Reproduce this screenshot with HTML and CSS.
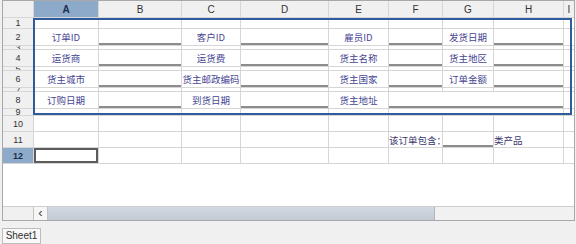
FILE: index.html
```html
<!DOCTYPE html>
<html lang="zh-CN">
<head>
    <meta charset="UTF-8">
    <title>订单</title>
    <link rel="stylesheet" href="styles.css">
</head>
<body>
    <div class="sheet">
        <div class="grid">
            <div class="corner"></div>
            <div class="ch active">A</div><div class="ch">B</div><div class="ch">C</div><div class="ch">D</div>
            <div class="ch">E</div><div class="ch">F</div><div class="ch">G</div><div class="ch">H</div><div class="ch">I</div>

            <div class="rh">1</div>
            <div></div><div></div><div></div><div></div><div></div><div></div><div></div><div></div><div></div>

            <div class="rh">2</div>
            <div class="lbl">订单ID</div><div class="val"></div>
            <div class="lbl">客户ID</div><div class="val"></div>
            <div class="lbl">雇员ID</div><div class="val"></div>
            <div class="lbl">发货日期</div><div class="val"></div>
            <div></div>

            <div class="rh">3</div>
            <div></div><div></div><div></div><div></div><div></div><div></div><div></div><div></div><div></div>

            <div class="rh">4</div>
            <div class="lbl">运货商</div><div class="val"></div>
            <div class="lbl">运货费</div><div class="val"></div>
            <div class="lbl">货主名称</div><div class="val"></div>
            <div class="lbl">货主地区</div><div class="val"></div>
            <div></div>

            <div class="rh">5</div>
            <div></div><div></div><div></div><div></div><div></div><div></div><div></div><div></div><div></div>

            <div class="rh">6</div>
            <div class="lbl">货主城市</div><div class="val"></div>
            <div class="lbl">货主邮政编码</div><div class="val"></div>
            <div class="lbl">货主国家</div><div class="val"></div>
            <div class="lbl">订单金额</div><div class="val"></div>
            <div></div>

            <div class="rh">7</div>
            <div></div><div></div><div></div><div></div><div></div><div></div><div></div><div></div><div></div>

            <div class="rh">8</div>
            <div class="lbl">订购日期</div><div class="val"></div>
            <div class="lbl">到货日期</div><div class="val"></div>
            <div class="lbl">货主地址</div><div class="val span3"></div>
            <div></div>

            <div class="rh">9</div>
            <div></div><div></div><div></div><div></div><div></div><div class="span3"></div><div></div>

            <div class="rh">10</div>
            <div></div><div></div><div></div><div></div><div></div><div></div><div></div><div></div><div></div>

            <div class="rh">11</div>
            <div></div><div></div><div></div><div></div><div></div>
            <div class="txt">该订单包含：</div><div class="val"></div><div class="txt">类产品</div>
            <div></div>

            <div class="rh active">12</div>
            <div class="sel"></div><div></div><div></div><div></div><div></div><div></div><div></div><div></div><div></div>
        </div>

        <!-- 打印区域的蓝色边框 -->
        <div class="range"></div>

        <div class="hscroll">
            <div class="hs-corner"></div>
            <div class="hs-btn">&lsaquo;</div>
            <div class="hs-thumb"></div>
            <div class="hs-track"></div>
        </div>
    </div>

    <div class="tabs">
        <span class="tab">Sheet1</span>
    </div>
</body>
</html>
```

FILE: styles.css
```css
body {
    margin: 0;
    width: 576px;
    height: 244px;
    background: #f0f0f0;
    font-family: "Liberation Sans", "Noto Sans CJK SC", sans-serif;
    overflow: hidden;
}
.sheet {
    position: relative;
    margin-left: 2px;
    width: 571px;
    height: 219px;
    border: 1px solid #a8a8a8;
    background: #fff;
    display: flex;
    flex-direction: column;
}
.grid {
    display: grid;
    grid-template-columns: 30px 64px 82px 58px 87px 59px 53px 50px 69px 1fr;
    grid-template-rows: 16px 10px 16px 3px 16px 3px 16px 3px 16px 6px 15px 15px 15px;
    gap: 1px;
    background: #d6d6d6;
    border-bottom: 1px solid #d6d6d6;
}
.grid > div {
    background: #fff;
    font-size: 10px;
    overflow: visible;
}
.grid > .corner,
.grid > .ch,
.grid > .rh {
    background: #f0f0f0;
    color: #333;
    display: flex;
    align-items: center;
    justify-content: center;
    overflow: hidden;
}
.grid > .rh {
    font-size: 9px;
}
.grid > .active {
    background: #8eaaca;
    color: #1d2d4a;
    font-weight: bold;
}
.grid > .lbl {
    color: #464693;
    font-family: "Noto Sans CJK SC", sans-serif;
    font-size: 9.5px;
    display: flex;
    align-items: center;
    justify-content: center;
    white-space: nowrap;
}
.grid > .txt {
    color: #3a3a6e;
    font-family: "Noto Sans CJK SC", sans-serif;
    font-size: 9.5px;
    display: flex;
    align-items: center;
    white-space: nowrap;
    position: relative;
    z-index: 1;
}
.grid > .val {
    box-sizing: border-box;
    border-bottom: 2px solid #8c8c8c;
}
.span3 {
    grid-column: span 3;
}
.grid > .sel {
    box-shadow: inset 0 0 0 2px #5c5c5c;
}
.range {
    position: absolute;
    left: 30px;
    top: 17px;
    width: 535px;
    height: 93px;
    border: 2px solid #2e5c9c;
    pointer-events: none;
}
.hscroll {
    margin-top: auto;
    display: flex;
    height: 13px;
    border-top: 1px solid #cfcfcf;
}
.hs-corner {
    width: 30px;
    background: #f0f0f0;
}
.hs-btn {
    width: 13px;
    border: 1px solid #c4c4c4;
    border-width: 0 1px;
    background: #f6f6f6;
    color: #444;
    font-size: 13px;
    line-height: 11px;
    text-align: center;
}
.hs-thumb {
    width: 386px;
    background: linear-gradient(#d2d8e0, #c3cad4);
    border-right: 1px solid #b0b6c0;
}
.hs-track {
    flex: 1;
    background: #f1f1f1;
}
.tabs {
    padding: 4px 0 0 2px;
}
.tab {
    display: inline-block;
    width: 37px;
    height: 14px;
    line-height: 14px;
    border: 1px solid #bcbcbc;
    background: #f8f8f8;
    color: #333;
    font-size: 10px;
    text-align: center;
}
```
